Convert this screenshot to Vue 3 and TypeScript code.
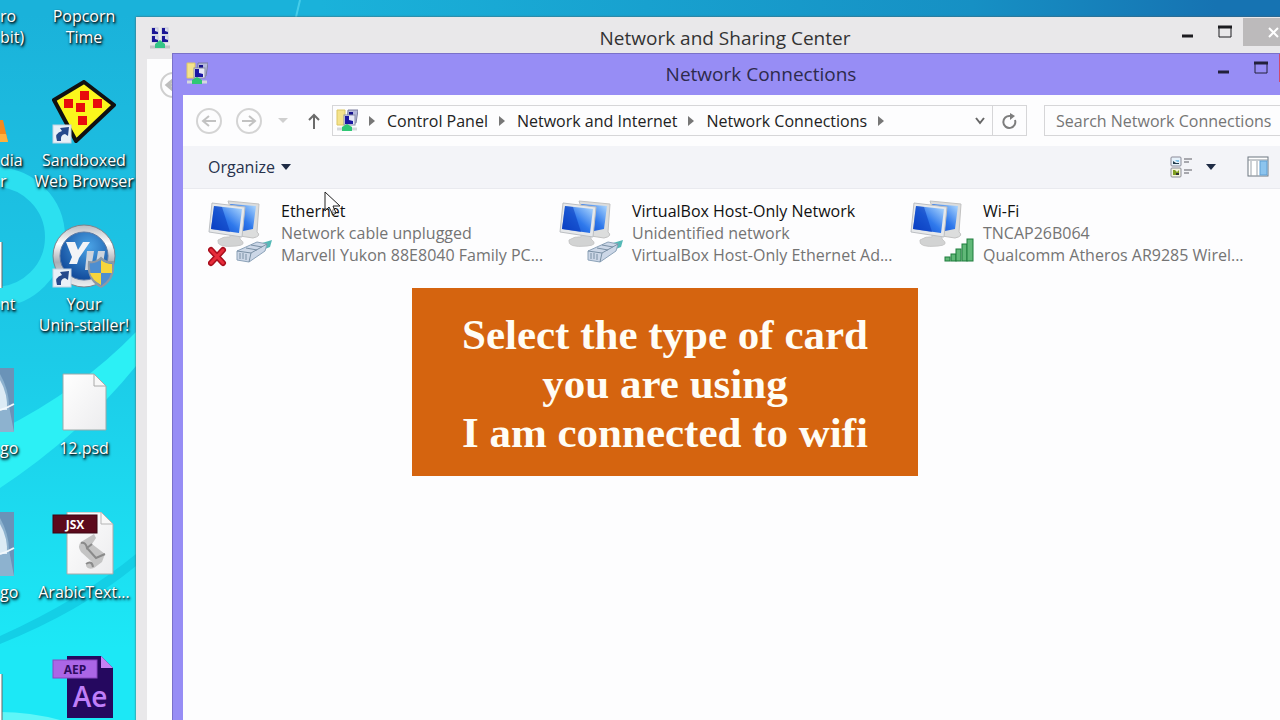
<script setup lang="ts">
import { ref } from 'vue'

type Badge = 'unplugged' | 'cable' | 'signal'

interface Connection {
  name: string
  status: string
  device: string
  badge: Badge
}

interface Shortcut {
  icon: string
  lines: string[]
}

const connections: Connection[] = [
  { name: 'Ethernet', status: 'Network cable unplugged', device: 'Marvell Yukon 88E8040 Family PC...', badge: 'unplugged' },
  { name: 'VirtualBox Host-Only Network', status: 'Unidentified network', device: 'VirtualBox Host-Only Ethernet Ad...', badge: 'cable' },
  { name: 'Wi-Fi', status: 'TNCAP26B064', device: 'Qualcomm Atheros AR9285 Wirel...', badge: 'signal' },
]

const crumbs: string[] = ['Control Panel', 'Network and Internet', 'Network Connections']

const edgeShortcuts: Shortcut[] = [
  { icon: 'none', lines: ['ro', 'bit)'] },
  { icon: 'cone', lines: ['dia', 'r'] },
  { icon: 'sheet', lines: ['nt'] },
  { icon: 'photo', lines: ['go'] },
  { icon: 'photo', lines: ['go'] },
  { icon: 'sheet', lines: [] },
]

const shortcuts: Shortcut[] = [
  { icon: 'none', lines: ['Popcorn', 'Time'] },
  { icon: 'sandbox', lines: ['Sandboxed', 'Web Browser'] },
  { icon: 'yu', lines: ['Your', 'Unin-staller!'] },
  { icon: 'page', lines: ['12.psd'] },
  { icon: 'jsx', lines: ['ArabicText...'] },
  { icon: 'aep', lines: [] },
]

const query = ref('')
</script>

<template>
  <main class="desktop">
    <svg class="wallpaper" viewBox="0 0 1280 720" preserveAspectRatio="xMinYMin slice" aria-hidden="true">
      <circle cx="-5" cy="237" r="60" fill="none" stroke="#2ce0f0" stroke-width="20" />
      <path d="M0 430 Q80 390 136 332 V366 Q80 435 0 488Z" fill="#2cf0f5" />
      <path d="M0 636 Q80 600 136 554 V566 Q80 612 0 644Z" fill="#14cfe6" />
      <path d="M0 712 Q30 712 60 720 H0Z" fill="#5ff6f8" />
      <path d="M296 17 L300 0" stroke="#45cdea" stroke-width="2" />
    </svg>

    <div class="icons">
      <ul class="column edge">
        <li v-for="(s, i) in edgeShortcuts" :key="i" class="shortcut">
          <svg class="glyph edge-glyph" viewBox="0 0 30 64" aria-hidden="true">
            <template v-if="s.icon === 'cone'">
              <path d="M0 40 H3 L8 62 H0Z" fill="#f58a1c" />
              <path d="M0 54 H6 L8 62 H0Z" fill="#ffb13d" />
            </template>
            <template v-else-if="s.icon === 'sheet'">
              <path d="M0 18 H2 V64 H0Z" fill="#fff" />
              <path d="M2 18 V64" stroke="#666" />
            </template>
            <template v-else-if="s.icon === 'photo'">
              <rect width="14" height="64" fill="#6a93b8" />
              <path d="M0 6 Q9 22 9 38 L14 64 H0Z" fill="#8db2cf" />
              <path d="M0 12 Q8 26 7 42 H0Z" fill="#dcebf5" />
              <path d="M0 42 Q7 40 14 36" stroke="#f2f8fc" stroke-width="2" fill="none" />
            </template>
          </svg>
          <span v-for="line in s.lines" :key="line" class="line">{{ line }}</span>
        </li>
      </ul>
      <ul class="column">
        <li v-for="(s, i) in shortcuts" :key="i" class="shortcut centered">
          <svg class="glyph" viewBox="0 0 64 64" aria-hidden="true">
            <defs>
              <linearGradient id="ring" x1="0" y1="0" x2="0" y2="1">
                <stop offset="0" stop-color="#b9bcc2" /><stop offset=".3" stop-color="#fff" /><stop offset=".6" stop-color="#a9adb5" /><stop offset="1" stop-color="#eef0f2" />
              </linearGradient>
              <radialGradient id="ball" cx=".6" cy=".3" r=".8">
                <stop offset="0" stop-color="#4aa3e6" /><stop offset="1" stop-color="#0a3f91" />
              </radialGradient>
              <linearGradient id="paper" x1="0" y1="0" x2="1" y2="1">
                <stop offset="0" stop-color="#fff" /><stop offset="1" stop-color="#ececee" />
              </linearGradient>
            </defs>
            <template v-if="s.icon === 'sandbox'">
              <path d="M32 2 L62 25 L24 61 L2 20Z" fill="#fbf61c" stroke="#111" stroke-width="4" stroke-linejoin="round" />
              <g fill="#e80c0c">
                <rect x="28" y="11" width="9" height="9" /><rect x="12" y="19" width="9" height="9" /><rect x="24" y="23" width="9" height="9" /><rect x="41" y="19" width="9" height="9" /><rect x="26" y="36" width="9" height="9" />
              </g>
            </template>
            <template v-if="s.icon === 'yu'">
              <circle cx="32" cy="32" r="31" fill="url(#ring)" stroke="#7d838c" />
              <circle cx="32" cy="32" r="24" fill="url(#ball)" stroke="#5b7ba6" />
              <path d="M14 18 H23 L26 26 L31 18 H38 L27 34 L25 40 H17 L20 33Z" fill="#f2f4f7" />
              <path d="M35 27 H42 L40 39 H44 L46 27 H53 L50 46 H33Z" fill="#cdd4dd" />
              <path d="M49 34 Q54 39 61 38 Q63 55 49 63 Q35 55 37 38 Q44 39 49 34Z" fill="#4e8ed0" stroke="#8d98a5" stroke-width="2" />
              <path d="M49 36 Q54 40 60 40 V49 H49Z M49 49 V61 Q40 56 38 49Z" fill="#f6d53c" />
            </template>
            <template v-if="s.icon === 'page'">
              <path d="M11 6 H42 L54 18 V62 H11Z" fill="url(#paper)" stroke="#9aa" />
              <path d="M42 6 V18 H54Z" fill="#f7f7f7" stroke="#aaa" />
            </template>
            <g v-if="s.icon === 'jsx'" transform="translate(0 -2)">
              <path d="M15 2 H49 L61 14 V64 H15Z" fill="url(#paper)" stroke="#aaa" />
              <path d="M49 2 V14 H61Z" fill="#f8f8f8" stroke="#b5b5b5" />
              <path d="M29 32 L42 24 L44 28 L40 34 L53 44 L50 52 L42 58 Q36 60 34 56 Q34 52 40 52 L29 42 Q25 36 29 32Z" fill="#c4c4c4" />
              <path d="M29 33 Q34 32 35 38 L40 34 M35 38 L44 48 L53 44 M34 54 Q40 50 41 57" fill="none" stroke="#8a8a8a" stroke-width="2" />
              <rect x="1" y="5" width="44" height="18" fill="#5c0a1c" stroke="#3c0512" />
              <text x="23" y="19" class="tag white">JSX</text>
            </g>
            <g v-if="s.icon === 'aep'" transform="translate(0 -1)">
              <path d="M15 1 H49 L61 13 V63 H15Z" fill="#25085f" />
              <path d="M49 1 V13 H61Z" fill="#c583f5" />
              <rect x="1" y="5" width="44" height="18" fill="#ab66e6" stroke="#8846c2" />
              <text x="23" y="19" class="tag dark">AEP</text>
              <text x="38" y="52" class="ae">Ae</text>
            </g>
            <template v-if="s.icon === 'sandbox' || s.icon === 'yu'">
              <rect x="1" y="45" width="18" height="18" fill="#e9f0f8" stroke="#c3d2e2" />
              <path d="M5 61 Q2 53 10 51 L8 48 L17 47 L16 56 L13 54 Q8 55 9 61Z" fill="#26498c" />
            </template>
          </svg>
          <span v-for="line in s.lines" :key="line" class="line">{{ line }}</span>
        </li>
      </ul>
    </div>

    <section class="window back" aria-label="Network and Sharing Center">
      <header class="titlebar">
        <svg class="app-icon" viewBox="0 0 22 24" aria-hidden="true">
          <g fill="#d9dbee" stroke="#c0c2d6"><rect x="2" y="2" width="6" height="6" /><rect x="12" y="2" width="6" height="6" /><rect x="2" y="10" width="6" height="6" /><rect x="12" y="10" width="6" height="6" /></g>
          <g fill="#1b1596"><path d="M2 2 H5 V5 L8 6 V8 H2Z" /><path d="M12 2 H15 V5 L18 6 V8 H12Z" /><path d="M2 10 H5 V13 L8 14 V16 H2Z" /><path d="M12 10 H15 V13 L18 14 V16 H12Z" /></g>
          <path d="M0 21 H20" stroke="#c3c4c7" stroke-width="3" />
          <path d="M10 14 L15 18 V22 H5 V18Z" fill="#35c486" />
        </svg>
        <h2 class="title">Network and Sharing Center</h2>
        <div class="controls">
          <button class="control" aria-label="Minimize"><svg viewBox="0 0 16 16"><path d="M2 12 H13" stroke="#1c1c20" stroke-width="3" /></svg></button>
          <button class="control" aria-label="Maximize"><svg viewBox="0 0 16 16"><path d="M2 3 H14 V13 H2Z" fill="none" stroke="#1c1c20" stroke-width="1" /><path d="M1 3 H15" stroke="#1c1c20" stroke-width="3" /></svg></button>
          <button class="control close" aria-label="Close"><svg viewBox="0 0 16 16"><path d="M4 4 L13 13 M13 4 L4 13" stroke="#fff" stroke-width="2" /></svg></button>
        </div>
      </header>
      <div class="back-body">
        <button class="round" aria-label="Back"><svg viewBox="0 0 28 28"><circle cx="14" cy="14" r="12" fill="none" stroke="#cfcfcf" stroke-width="2" /><path d="M14 9 L8 14 L14 19 M8 14 H20" fill="none" stroke="#bdbdbd" stroke-width="3" /></svg></button>
      </div>
    </section>

    <section class="window front" aria-label="Network Connections">
      <header class="titlebar">
        <svg class="app-icon" viewBox="0 0 22 24" aria-hidden="true"><use href="#folder-net" /></svg>
        <h1 class="title">Network Connections</h1>
        <div class="controls">
          <button class="control" aria-label="Minimize"><svg viewBox="0 0 16 16"><path d="M2 12 H13" stroke="#22203a" stroke-width="3" /></svg></button>
          <button class="control" aria-label="Maximize"><svg viewBox="0 0 16 16"><path d="M2 3 H14 V13 H2Z" fill="none" stroke="#22203a" stroke-width="1" /><path d="M1 3 H15" stroke="#22203a" stroke-width="3" /></svg></button>
          <button class="control close" aria-label="Close"></button>
        </div>
      </header>

      <div class="client">
        <nav class="navbar" aria-label="Location">
          <button class="round" aria-label="Back"><svg viewBox="0 0 28 28"><circle cx="14" cy="14" r="12" fill="none" stroke="#d4d4d4" stroke-width="2" /><path d="M14 9 L8 14 L14 19 M8 14 H21" fill="none" stroke="#c2c2c2" stroke-width="2" /></svg></button>
          <button class="round" aria-label="Forward"><svg viewBox="0 0 28 28"><circle cx="14" cy="14" r="12" fill="none" stroke="#d4d4d4" stroke-width="2" /><path d="M14 9 L20 14 L14 19 M20 14 H7" fill="none" stroke="#c2c2c2" stroke-width="2" /></svg></button>
          <button class="recent" aria-label="Recent locations"><svg viewBox="0 0 10 6"><path d="M0 0 H10 L5 5Z" fill="#cfcfcf" /></svg></button>
          <button class="up" aria-label="Up"><svg viewBox="0 0 14 18"><path d="M7 17 V3 M2 8 L7 3 L12 8" fill="none" stroke="#6b6b6b" stroke-width="2" /></svg></button>
          <div class="address">
            <svg class="app-icon" viewBox="0 0 22 24" aria-hidden="true">
              <g id="folder-net">
                <path d="M1 1 H9 V16 H1Z" fill="#f5e38c" stroke="#dcc765" />
                <path d="M12 1 H22 L20 14 H11Z" fill="#b4b8dd" stroke="#7c7f9e" />
                <path d="M13 3 H17 V6 H13Z" fill="#14108c" />
                <rect x="8" y="6" width="11" height="10" fill="#e6e8f6" stroke="#8a8da8" />
                <path d="M9 7 H13 V11 L17 12 V15 H9Z" fill="#1b16a3" />
                <path d="M1 20 H21" stroke="#d4d8dc" stroke-width="3" />
                <path d="M11 15 L16 18 V22 H6 V18Z" fill="#2fc774" />
              </g>
            </svg>
            <svg class="sep" viewBox="0 0 6 10" aria-hidden="true"><path d="M0 0 L6 5 L0 10Z" fill="#777" /></svg>
            <template v-for="crumb in crumbs" :key="crumb">
              <a href="#" class="crumb">{{ crumb }}</a>
              <svg class="sep" viewBox="0 0 6 10" aria-hidden="true"><path d="M0 0 L6 5 L0 10Z" fill="#777" /></svg>
            </template>
            <button class="history" aria-label="Previous locations"><svg viewBox="0 0 12 8"><path d="M2 1 L6 6 L10 1" fill="none" stroke="#666" stroke-width="2" /></svg></button>
            <button class="refresh" aria-label="Refresh"><svg viewBox="0 0 16 16"><path d="M13 7 A6 6 0 1 1 8 3" fill="none" stroke="#7d7d7d" stroke-width="2" /><path d="M8 0 L13 3 L8 7Z" fill="#7d7d7d" /></svg></button>
          </div>
          <input v-model="query" class="search" type="search" placeholder="Search Network Connections" aria-label="Search Network Connections" />
        </nav>

        <div class="toolbar">
          <button class="organize">Organize <svg viewBox="0 0 10 6" aria-hidden="true"><path d="M0 0 H10 L5 6Z" fill="#1e2b45" /></svg></button>
          <div class="tools">
            <button class="view" aria-label="Change your view">
              <svg class="view-icon" viewBox="0 0 24 24">
                <rect x="1" y="2" width="10" height="9" rx="1" fill="#e6f1fa" stroke="#8b8b98" /><path d="M3 9 V6 L6 8 H9 V9Z" fill="#223c4c" /><path d="M5 5 H9 V7 H7Z" fill="#84c5ea" />
                <rect x="1" y="13" width="10" height="9" rx="1" fill="#f2f4df" stroke="#8b8b98" /><path d="M3 15 H5 L7 17 L9 15 V20 H3Z" fill="#7e9d21" /><path d="M6 18 H9 V20 H6Z" fill="#333" />
                <path d="M14 4 H22 M14 7 H19 M14 15 H22 M14 18 H19" stroke="#5c5c64" stroke-width="1" />
              </svg>
            </button>
            <button class="more" aria-label="More options"><svg viewBox="0 0 10 6"><path d="M0 0 H10 L5 6Z" fill="#1e2b45" /></svg></button>
            <button class="view pane" aria-label="Show the preview pane">
              <svg class="view-icon" viewBox="0 0 24 24"><rect x="2" y="2" width="20" height="19" fill="#fff" stroke="#6d7680" /><path d="M2 5 H22" stroke="#8c949c" stroke-width="1" /><path d="M5 6 V21 M11 6 V21" stroke="#9aa2aa" /><rect x="14" y="6" width="7" height="14" fill="#8cc4ee" stroke="#5e9fd4" /></svg>
            </button>
          </div>
        </div>

        <ul class="connections">
          <li v-for="c in connections" :key="c.name" class="connection">
            <svg class="adapter" viewBox="0 0 66 68" aria-hidden="true">
              <defs>
                <linearGradient id="screen" x1="0" y1="1" x2="1" y2="0">
                  <stop offset="0" stop-color="#0a3fc4" /><stop offset=".5" stop-color="#2f79ec" /><stop offset="1" stop-color="#b4dcff" />
                </linearGradient>
              </defs>
              <path d="M20 1 L51 4 L49 32 Q54 36 45 38 L32 36Z" fill="#dcdddd" stroke="#c2c2c2" />
              <path d="M22 4 L48 6 L45 29 L30 32Z" fill="url(#screen)" />
              <path d="M22 34 H32 L32 39 Q40 45 28 46 Q8 48 10 40 Q16 36 22 37Z" fill="#d2d3d3" stroke="#c8c8c8" />
              <path d="M4 3 L37 7 L34 37 L1 32Z" fill="#e6e8ea" stroke="#bcbfc3" />
              <path d="M6 6 L34 9 L31 33 L3 29Z" fill="url(#screen)" />
              <path d="M6 6 L14 7 L22 32 L3 29Z" fill="#0738bb" opacity=".55" />
              <g v-if="c.badge !== 'signal'">
                <path d="M54 43 L64 40 L62 47 L57 49Z" fill="#55b9b7" />
                <path d="M29 51 L49 42 L59 44 L57 51 L41 62 L29 60Z" fill="#ccd7e7" stroke="#8ca2b8" />
                <path d="M29 51 L43 53 L41 62 M43 53 L59 44 M32 53 V59 M35 53 V59 M38 54 V60 M38 48 L49 50 M43 45 L54 47" stroke="#7a90a5" fill="none" />
              </g>
              <g v-if="c.badge === 'unplugged'">
                <path d="M3 50 L15 63 M15 50 L3 63" stroke="#a90e1d" stroke-width="6" stroke-linecap="round" />
                <path d="M3 50 L15 63 M15 50 L3 63" stroke="#e62c3a" stroke-width="3" stroke-linecap="round" />
              </g>
              <g v-if="c.badge === 'signal'" fill="#61b878" stroke="#1f7c3c">
                <rect x="35" y="57" width="5" height="4" /><rect x="41" y="54" width="5" height="7" /><rect x="46" y="49" width="5" height="12" /><rect x="52" y="44" width="5" height="17" /><rect x="57" y="39" width="6" height="22" />
              </g>
            </svg>
            <div class="details">
              <span class="name">{{ c.name }}</span>
              <span>{{ c.status }}</span>
              <span>{{ c.device }}</span>
            </div>
          </li>
        </ul>
      </div>
    </section>

    <p class="caption">Select the type of card<br />you are using<br />I am connected to wifi</p>

    <svg class="pointer" viewBox="0 0 20 28" aria-hidden="true"><path d="M3 2 V21 L7 17 L11 25 L14 23 L11 16 H18Z" fill="#fff" fill-opacity=".6" stroke="#222" stroke-width="1" /></svg>
  </main>
</template>

<style>
body {
  margin: 0;
}
</style>

<style scoped>
.desktop {
  position: relative;
  min-height: 100vh;
  overflow: hidden;
  background: linear-gradient(to bottom, transparent 2%, #1cb9de 15%, #1ccbe8 50%, #1ce8f6 90%), linear-gradient(to right, #1ab2da 25%, #1690c4 76%, #1673b2 95%);
  font-family: "Open Sans", "Noto Sans", sans-serif;
  font-size: 16px;
  color: #222;
}
.wallpaper {
  position: absolute;
  inset: 0;
  width: 100%;
  height: 100%;
}
ul {
  list-style: none;
  margin: 0;
  padding: 0;
}
button {
  border: 0;
  padding: 0;
  background: none;
  font: inherit;
  color: inherit;
  display: flex;
  align-items: center;
  justify-content: center;
}
.icons {
  position: absolute;
  top: -64px;
  left: 0;
  display: flex;
}
.column {
  width: 108px;
}
.edge {
  width: 30px;
  overflow: hidden;
}
.shortcut {
  height: 144px;
  display: flex;
  flex-direction: column;
  line-height: 21px;
  color: #fff;
  white-space: nowrap;
  text-shadow: 1px 1px 2px #000, 1px 2px 3px #032a38;
}
.centered {
  align-items: center;
}
.glyph {
  width: 64px;
  height: 64px;
  margin-bottom: 6px;
  flex: none;
  text-shadow: none;
}
.edge-glyph {
  width: 30px;
}
.tag {
  font-size: 12px;
  font-weight: 700;
  text-anchor: middle;
}
.white {
  fill: #fff;
}
.dark {
  fill: #2d0b5e;
}
.ae {
  font-size: 28px;
  font-weight: 600;
  text-anchor: middle;
  fill: #c07ff8;
}
.window {
  position: absolute;
  bottom: -40px;
  display: flex;
  flex-direction: column;
  box-sizing: border-box;
}
.back {
  left: 136px;
  right: -34px;
  top: 17px;
  padding: 0 11px;
  background: #e9e8ea;
  box-shadow: 0 0 2px #555;
}
.front {
  left: 172px;
  right: -70px;
  top: 53px;
  padding: 0 11px;
  background: #978df5;
  box-shadow: inset 0 0 0 1px #7a71c9;
}
.titlebar {
  position: relative;
  height: 42px;
  flex: none;
  display: flex;
  align-items: center;
  padding: 0 3px;
}
.app-icon {
  width: 22px;
  height: 24px;
  flex: none;
}
.title {
  flex: 1;
  margin: 0 22px 0 0;
  text-align: center;
  font-size: 19px;
  font-weight: 400;
  line-height: 42px;
  color: #333;
}
.front .title {
  color: #2d2a4c;
}
.controls {
  position: absolute;
  top: 1px;
  right: 0;
  display: flex;
}
.control {
  width: 37px;
  height: 28px;
}
.control svg {
  width: 16px;
  height: 16px;
}
.close {
  width: 60px;
  background: #bcbabb;
}
.front .close {
  background: #d2486a;
}
.back-body {
  flex: 1;
  padding: 12px;
  background: #fdfdfe;
}
.client {
  flex: 1;
  background: #fdfdfe;
}
.round {
  width: 28px;
  height: 28px;
  flex: none;
}
.round svg {
  width: 28px;
  height: 28px;
}
.navbar {
  display: flex;
  align-items: center;
  height: 51px;
  padding: 0 14px 0 12px;
  box-sizing: border-box;
}
.navbar .round {
  margin-right: 12px;
}
.recent {
  width: 16px;
  margin-right: 16px;
}
.recent svg,
.organize svg,
.more svg {
  width: 10px;
  height: 6px;
}
.up {
  width: 14px;
  margin-right: 11px;
}
.up svg {
  width: 14px;
  height: 18px;
}
.address {
  flex: 1;
  display: flex;
  align-items: center;
  height: 31px;
  box-sizing: border-box;
  border: 1px solid #d6d6d8;
  padding-left: 3px;
}
.sep {
  width: 6px;
  height: 10px;
  margin: 0 12px 0 11px;
  flex: none;
}
.crumb {
  color: #222;
  text-decoration: none;
  white-space: nowrap;
}
.history {
  width: 24px;
  margin-left: auto;
}
.history svg {
  width: 12px;
  height: 8px;
}
.refresh {
  align-self: stretch;
  width: 34px;
  border-left: 1px solid #d6d6d8;
}
.refresh svg {
  width: 16px;
  height: 16px;
}
.search {
  width: 281px;
  height: 31px;
  margin-left: 17px;
  box-sizing: border-box;
  border: 1px solid #d6d6d8;
  border-radius: 0;
  padding: 0 11px;
  background: #fdfdfe;
  font: inherit;
  color: #222;
  outline: none;
}
.search::placeholder {
  color: #757575;
  opacity: 1;
}
.toolbar {
  display: flex;
  align-items: center;
  justify-content: space-between;
  height: 43px;
  padding: 0 69px 0 25px;
  box-sizing: border-box;
  background: #f3f4f8;
  border-bottom: 1px solid #e9eaef;
}
.organize {
  gap: 6px;
  color: #27324c;
}
.tools {
  display: flex;
  align-items: center;
}
.view-icon {
  width: 24px;
  height: 24px;
}
.more {
  width: 34px;
}
.pane {
  margin-left: 18px;
}
.connections {
  display: grid;
  grid-template-columns: repeat(3, 351px);
  padding: 11px 25px;
}
.connection {
  display: flex;
  gap: 7px;
}
.adapter {
  width: 66px;
  height: 68px;
  flex: none;
}
.details {
  display: flex;
  flex-direction: column;
  line-height: 22px;
  color: #747474;
  white-space: nowrap;
}
.name {
  color: #111;
}
.caption {
  position: absolute;
  left: 412px;
  top: 288px;
  width: 506px;
  margin: 0;
  padding: 22px 0 19px;
  box-sizing: border-box;
  background: #d5640f;
  color: #fffdf5;
  font: 700 43px/49px "Liberation Serif", serif;
  text-align: center;
}
.pointer {
  position: absolute;
  left: 322px;
  top: 190px;
  width: 20px;
  height: 28px;
}
</style>
